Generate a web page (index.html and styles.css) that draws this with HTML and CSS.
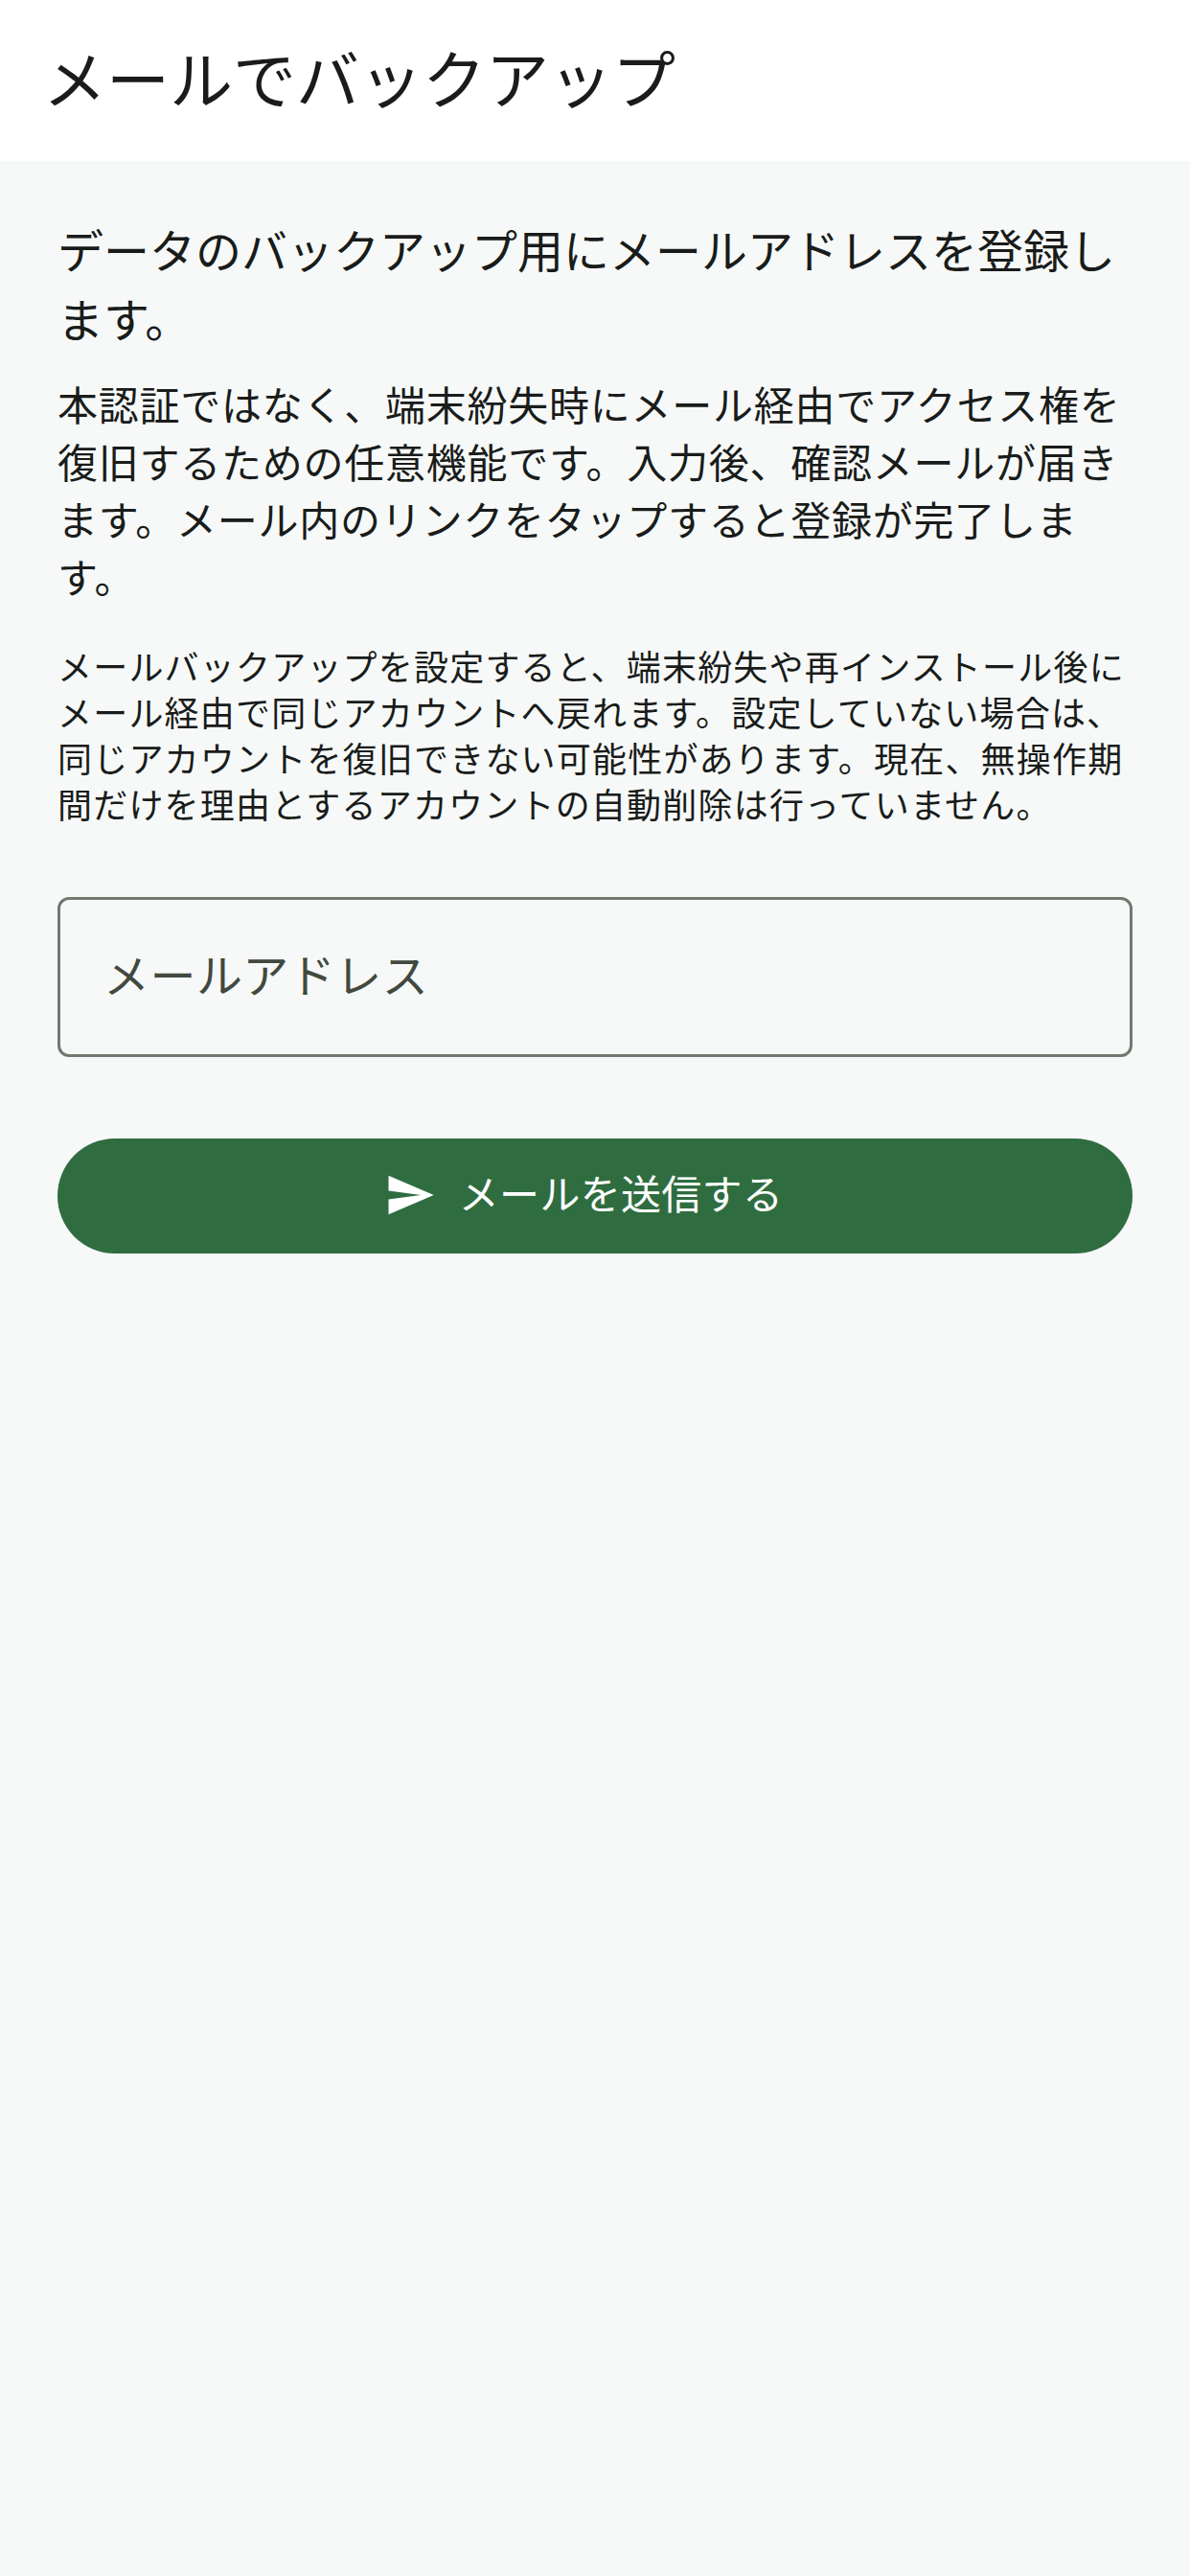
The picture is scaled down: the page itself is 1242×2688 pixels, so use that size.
FILE: index.html
```html
<!DOCTYPE html>
<html lang="ja">
<head>
<meta charset="utf-8">
<title>メールでバックアップ</title>
<link rel="stylesheet" href="styles.css">
</head>
<body>
<header class="app-bar"><h1 class="app-title">メールでバックアップ</h1></header>
<main class="content">
  <p class="lead">データのバックアップ用にメールアドレスを登録します。</p>
  <p class="body">本認証ではなく、端末紛失時にメール経由でアクセス権を復旧するための任意機能です。入力後、確認メールが届きます。メール内のリンクをタップすると登録が完了します。</p>
  <p class="note">メールバックアップを設定すると、端末紛失や再インストール後にメール経由で同じアカウントへ戻れます。設定していない場合は、同じアカウントを復旧できない可能性があります。現在、無操作期間だけを理由とするアカウントの自動削除は行っていません。</p>
  <label class="field"><span class="field-label">メールアドレス</span></label>
  <button class="send" type="button">
    <svg class="send-icon" viewBox="0 0 24 24" aria-hidden="true"><path d="M2.01 21L23 12 2.01 3 2 10l15 2-15 2z"/></svg>
    <span class="send-label">メールを送信する</span>
  </button>
</main>
</body>
</html>
```
FILE: styles.css
```css
* { box-sizing: border-box; }
html, body { margin: 0; height: 100%; }
body {
  min-height: 2688px;
  background: #f7f9f8;
  color: #191c1a;
  font-family: "Noto Sans CJK JP", "Noto Sans", sans-serif;
  display: flex;
  flex-direction: column;
}
.app-bar {
  height: 168px;
  background: #fff;
  padding: 0 45px 10px;
  display: flex;
  align-items: center;
}
.app-title { margin: 0; font-size: 66px; line-height: 84px; font-weight: 400; }
.content { padding: 55px 60px 0; display: flex; flex-direction: column; }
.lead { margin: 0 0 24px; font-size: 48px; line-height: 72px; }
.body { margin: 0 0 39px; font-size: 42px; line-height: 60px; letter-spacing: 0.75px; }
.note { margin: 0 0 74px; font-size: 36px; line-height: 48px; letter-spacing: 1.2px; }
.field {
  height: 167px;
  border: 3px solid #72796f;
  border-radius: 12px;
  padding: 0 45px 9px;
  display: flex;
  align-items: center;
  margin-bottom: 85px;
}
.field-label { font-size: 48px; line-height: 72px; letter-spacing: 0.45px; color: #42493f; }
.send {
  height: 120px;
  border: 0;
  border-radius: 60px;
  background: #2f6d40;
  color: #fff;
  font: inherit;
  font-size: 42px;
  line-height: 60px;
  letter-spacing: 0.3px;
  display: flex;
  align-items: center;
  justify-content: center;
  gap: 24px;
  padding: 0 24px 3px 0;
}
.send-icon { width: 54px; height: 54px; fill: #fff; }
.send-label { margin-bottom: 5px; }
```
